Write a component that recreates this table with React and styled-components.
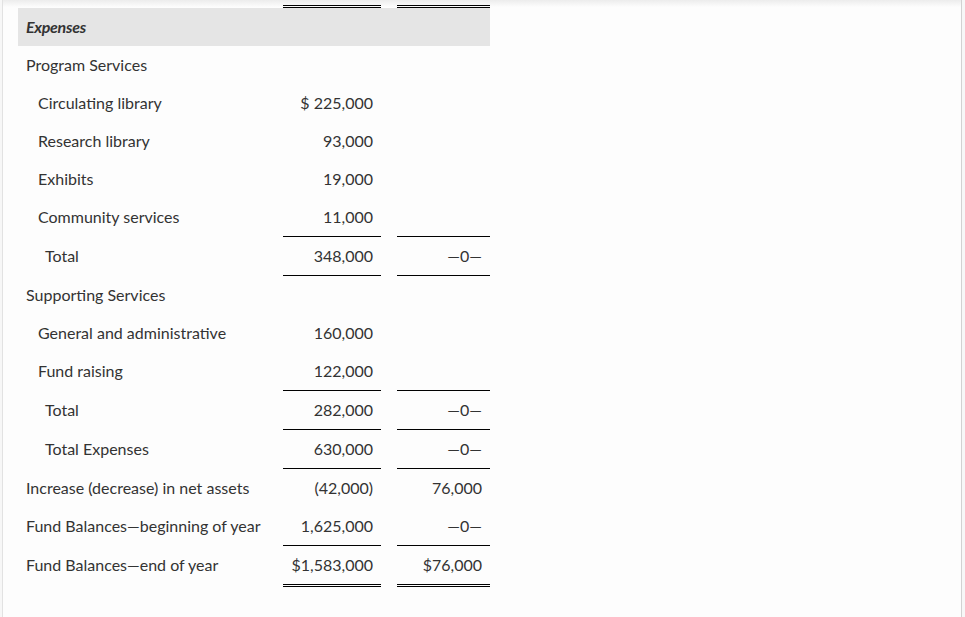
import React from "react";
import styled, { createGlobalStyle } from "styled-components";

const Global = createGlobalStyle`
  html, body { margin: 0; padding: 0; background: #f7f7f7; }
  body { font-family: Lato, "Liberation Sans", sans-serif; }
`;

const Frame = styled.div`
  box-sizing: border-box;
  margin-left: 2px;
  width: 960px;
  height: 617px;
  border-left: 1px solid #e2e2e2;
  border-right: 1px solid #d2d2d2;
  background: linear-gradient(#ececec 0px, #fdfdfd 7px, #fdfdfd 100%);
  padding-left: 15px;
  overflow: hidden;
`;

const Table = styled.div`
  width: 472px;
  display: flex;
  flex-direction: column;
`;

const Row = styled.div`
  display: grid;
  grid-template-columns: 265px 114px 93px;
  background: ${(p) => (p.$head ? "#e5e5e5" : "transparent")};
`;

const Label = styled.div`
  box-sizing: border-box;
  height: ${(p) => p.$h ?? 38}px;
  display: flex;
  align-items: center;
  padding-left: ${(p) => 8 + (p.$indent || 0)}px;
  padding-bottom: ${(p) => (p.$h ? 0 : 2)}px;
  font-size: 16px;
  color: #333;
  white-space: nowrap;
  font-style: ${(p) => (p.$head ? "italic" : "normal")};
  font-weight: ${(p) => (p.$head ? 700 : 400)};
  letter-spacing: ${(p) => (p.$head ? "-0.3px" : "0")};
`;

const Num = styled.div`
  box-sizing: content-box;
  height: ${(p) => (p.$h ?? 38) - (p.$h ? 0 : 2)}px;
  display: flex;
  align-items: center;
  justify-content: flex-end;
  padding-right: 8px;
  padding-bottom: ${(p) => (p.$h ? 0 : 2)}px;
  margin-right: ${(p) => (p.$first ? 16 : 0)}px;
  font-size: 16px;
  color: #333;
  white-space: nowrap;
  border-bottom: ${(p) =>
    p.$line === "double" ? "3px double #000" : p.$line === "single" ? "1px solid #000" : "none"};
`;

const rows = [
  { label: "Program Services", indent: 0 },
  { label: "Circulating library", indent: 12, a: "$ 225,000" },
  { label: "Research library", indent: 12, a: "93,000" },
  { label: "Exhibits", indent: 12, a: "19,000" },
  { label: "Community services", indent: 12, a: "11,000", line: "single", bline: "single" },
  { label: "Total", indent: 19, a: "348,000", b: "—0—", line: "single", bline: "single" },
  { label: "Supporting Services", indent: 0 },
  { label: "General and administrative", indent: 12, a: "160,000" },
  { label: "Fund raising", indent: 12, a: "122,000", line: "single", bline: "single" },
  { label: "Total", indent: 19, a: "282,000", b: "—0—", line: "single", bline: "single" },
  { label: "Total Expenses", indent: 19, a: "630,000", b: "—0—", line: "single", bline: "single" },
  { label: "Increase (decrease) in net assets", indent: 0, a: "(42,000)", b: "76,000" },
  { label: "Fund Balances—beginning of year", indent: 0, a: "1,625,000", b: "—0—", line: "single", bline: "single" },
  { label: "Fund Balances—end of year", indent: 0, a: "$1,583,000", b: "$76,000", line: "double", bline: "double" },
];

export default function App() {
  return (
    <>
      <Global />
      <Frame>
        <Table>
          <Row>
            <Label $h={5} />
            <Num $first $h={5} $line="double" />
            <Num $h={5} $line="double" />
          </Row>
          <Row $head>
            <Label $head>Expenses</Label>
            <Num $first />
            <Num />
          </Row>
          {rows.map((r, i) => (
            <Row key={i}>
              <Label $indent={r.indent}>{r.label}</Label>
              <Num $first $line={r.line}>{r.a}</Num>
              <Num $line={r.bline}>{r.b}</Num>
            </Row>
          ))}
        </Table>
      </Frame>
    </>
  );
}
